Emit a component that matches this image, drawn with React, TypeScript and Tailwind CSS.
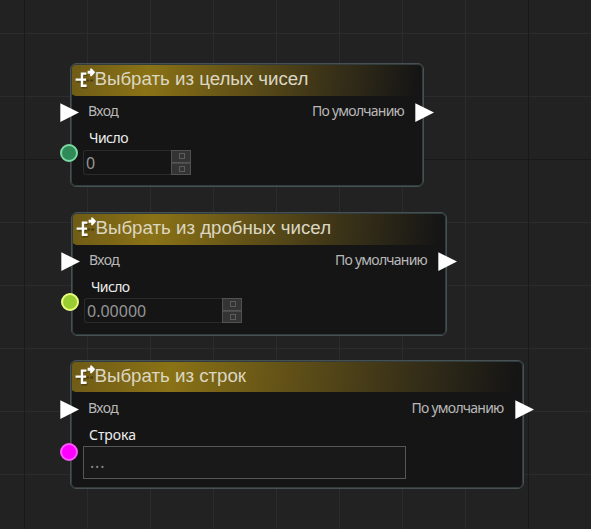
import React from "react";

const vertical = [24, 87, 150, 213, 276, 339, 402, 465, 528];
const horizontal = [33, 96, 159, 222, 285, 348, 411, 474];

function Grid() {
  return (
    <svg className="absolute inset-0" width="591" height="529" shapeRendering="crispEdges">
      {horizontal.map((y) => (
        <rect key={y} x="0" y={y} width="591" height="1" fill={y === 159 ? "#191919" : "#2c2c2c"} />
      ))}
      {vertical.map((x) => (
        <rect key={x} x={x} y="0" width="1" height="529" fill={x === 24 || x === 528 ? "#191919" : "#2c2c2c"} />
      ))}
    </svg>
  );
}

function BranchIcon() {
  return (
    <svg className="mt-[3px] h-[22px] w-[20px] shrink-0" viewBox="0 0 20 22" fill="none">
      <path d="M12 12.4h2M15.2 12.4h3" stroke="#4a3d0c" strokeWidth="2" />
      <path d="M11.5 6H7V18.4H11.5M1 12.4H10.6" stroke="#3d330d" strokeOpacity=".6" strokeWidth="2.4" transform="translate(.8 .9)" />
      <path d="M11.4 5.6H7V17.8H11.6M.6 11.6H11" stroke="#fff" strokeWidth="2.4" />
      <path d="M12.6 2.8H15.2V0.6H16.6L19.8 3.8V4.8L16.6 8.2H15.2V5.8H12.6Z" fill="#fff" />
    </svg>
  );
}

function ExecPin({ className }: { className: string }) {
  return (
    <svg className={"absolute h-[19px] w-[19px] " + className} viewBox="0 0 19 19">
      <path d="M.3 0.2L19 9.6L.3 19Z" fill="#fff" />
    </svg>
  );
}

function Spinner({ value, width }: { value: string; width: string }) {
  return (
    <div className={"flex h-[25px] " + width}>
      <div className="flex flex-1 items-center rounded-l-[3px] border border-r-0 border-[#2b2b2b] pl-[2px] text-[16px] leading-none text-[#969696]">
        <span>{value}</span>
      </div>
      <div className="flex w-5 flex-col border border-[#515151] bg-[#343434]">
        <div className="flex flex-1 items-center justify-center border-b border-[#555] pl-px">
          <i className="size-[6px] border border-[#5c5c5c]" />
        </div>
        <div className="flex flex-1 items-center justify-center border-t border-[#4b4b4b] pl-px">
          <i className="size-[6px] border border-[#5c5c5c]" />
        </div>
      </div>
    </div>
  );
}

type NodeProps = {
  place: string;
  title: string;
  label: string;
  labelClass: string;
  pin: string;
  children: React.ReactNode;
};

function Node({ place, title, label, labelClass, pin, children }: NodeProps) {
  return (
    <section className={"absolute rounded-[6px] bg-[#151515] pt-px " + place}>
      <header className="mx-px flex h-[31.5px] rounded-[5px] bg-[linear-gradient(97deg,#6f5b16_0%,#8a7216_22%,#695717_43%,#352e18_76%,#151515_98%)] pl-[4px] pt-px">
        <BranchIcon />
        <h2 className="-ml-[0.5px] whitespace-nowrap pt-[2px] font-['Liberation_Sans',sans-serif] text-[18.7px] leading-[24px] text-[#dcd7c3]">
          {title}
        </h2>
      </header>
      <div className="flex h-[32.5px] justify-between pl-[18px] pr-[20px] pt-[5.5px] text-[14px] leading-[20px] text-[#b9b9b9]">
        <span className="tracking-[-0.6px]">Вход</span>
        <span className="tracking-[-0.77px]">По умолчанию</span>
      </div>
      <div className={"text-[14px] leading-[20px] text-[#eee] " + labelClass}>{label}</div>
      <div className="pl-[13px]">{children}</div>
      <span className="pointer-events-none absolute inset-0 rounded-[6px] border border-[#465153] shadow-[inset_0_0_0_1px_#333c3d]" />
      <ExecPin className="left-[-10px] top-[40px]" />
      <ExecPin className="right-[-10px] top-[40px]" />
      <span className={"absolute left-[-10px] size-[18px] rounded-full border-2 " + pin} />
    </section>
  );
}

export default function App() {
  return (
    <main className="relative h-[529px] w-[591px] overflow-hidden bg-[#222] font-['Noto_Sans',sans-serif]">
      <Grid />
      <Node
        place="left-[70px] top-[63px] w-[354px] h-[124px]"
        title="Выбрать из целых чисел"
        label="Число"
        labelClass="h-[22px] pl-[19px] tracking-[-0.5px]"
        pin="top-[81px] bg-[#2e8b57] border-[#7cd9a3]"
      >
        <Spinner value="0" width="w-[108px]" />
      </Node>
      <Node
        place="left-[71px] top-[212px] w-[376px] h-[124px]"
        title="Выбрать из дробных чисел"
        label="Число"
        labelClass="h-[21px] pl-[20px] tracking-[-0.6px]"
        pin="top-[80.5px] bg-[#9acd32] border-[#e9ff7d]"
      >
        <Spinner value="0.00000" width="w-[158px]" />
      </Node>
      <Node
        place="left-[70px] top-[359.5px] w-[453.5px] h-[129px]"
        title="Выбрать из строк"
        label="Строка"
        labelClass="h-[21px] pl-[19px] tracking-[-0.05px]"
        pin="top-[83px] bg-[#f0f] border-[#ff55ff]"
      >
        <div className="flex h-[33px] w-[323px] items-center border border-[#565656] bg-[#191919] pl-[6px] text-[16px] tracking-[0.8px] text-[#8b8b8b]">
          ...
        </div>
      </Node>
    </main>
  );
}
